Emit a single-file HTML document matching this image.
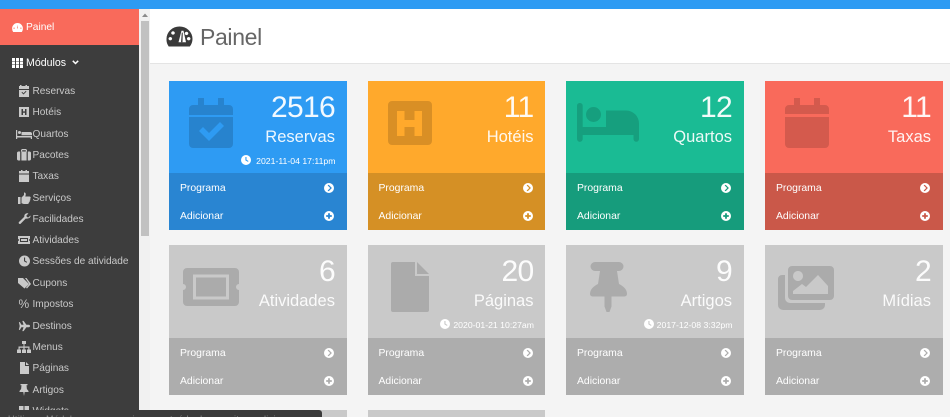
<!DOCTYPE html>
<html lang="pt"><head><meta charset="utf-8"><title>Painel</title>
<style>
html,body{margin:0;padding:0;width:950px;height:417px;overflow:hidden;background:#f4f4f4;font-family:"Liberation Sans",sans-serif}
div,span,svg{position:absolute;display:block}
.wrap{left:0;top:0;width:950px;height:417px;overflow:hidden;background:#f4f4f4}
.top{left:0;top:0;width:950px;height:9px;background:#2e9bf3}
.side{left:0;top:9px;width:139px;height:408px;background:#3d3d3d}
.act{left:0;top:9px;width:139px;height:36px;background:#f96a5b}
.sb{left:139px;top:9px;width:11px;height:408px;background:#f1f1f1}
.th{left:141px;top:21px;width:8px;height:215px;background:#c1c1c1}
.hd{left:150px;top:9px;width:800px;height:54px;background:#fff;border-bottom:1px solid #e4e4e4}
.t{font-size:23px;color:#666;left:200px;top:23px;line-height:28px;letter-spacing:-.35px}
.m{left:32.5px;font-size:10.1px;line-height:14px;color:#c9c9c9;white-space:nowrap;margin-top:1px}
.mi{left:17px;width:14px;height:12px;fill:#c9c9c9}
.c{width:177.5px;height:149.5px;overflow:hidden}
.b{left:0;top:92.5px;width:100%;height:57px}
.n{right:11.5px;top:8.5px;font-size:30px;line-height:36px;letter-spacing:-.7px;color:rgba(255,255,255,.94);white-space:nowrap}
.l{right:11.5px;top:44.5px;font-size:16.5px;line-height:22px;color:rgba(255,255,255,.92);white-space:nowrap}
.d{right:11px;top:73.5px;font-size:8.7px;line-height:12px;color:#fff;white-space:nowrap}
.dc{width:10px;height:10px;top:74px;fill:#fff}
.p{left:11px;font-size:10.4px;line-height:14px;color:#fff;white-space:nowrap}
.r{left:155px;width:10px;height:10px;fill:#fff}
.i{fill:rgba(0,0,0,.15)}
.g{background:#c9c9c9}.g .b{background:#adadad}
.tip{left:0;top:410px;width:322px;height:7px;background:#3a3a3a;border-radius:0 3px 0 0;overflow:hidden}
.tip span{left:8px;top:3.5px;font-size:9px;line-height:10px;color:#8c8c8c;white-space:nowrap;letter-spacing:.35px}
</style></head><body>
<div class="wrap">
<svg width="0" height="0" style="left:0;top:0"><defs>
<symbol id="go" viewBox="0 0 10 10"><path fill-rule="evenodd" d="M5 0a5 5 0 1 1 0 10A5 5 0 0 1 5 0zM3.6 2.4 6.2 5 3.6 7.6 4.7 8.2 7.9 5 4.7 1.8z"/></symbol>
<symbol id="pl" viewBox="0 0 10 10"><path fill-rule="evenodd" d="M5 0a5 5 0 1 1 0 10A5 5 0 0 1 5 0zM4.100 2.200v1.900H2.200v1.800h1.900v1.900h1.800V5.900h1.900V4.100H5.900V2.200z"/></symbol>
<symbol id="ck" viewBox="0 0 10 10"><path fill-rule="evenodd" d="M5 0a5 5 0 1 1 0 10A5 5 0 0 1 5 0zM4.400 2v3.400L7 6.900l.5-.9-2-1.200V2z"/></symbol>
</defs></svg>

<div class="top"></div>
<div class="side"></div>
<div class="act"></div>
<svg style="left:11.500px;top:23px;fill:#fff" width="11" height="9" viewBox="0 0 12 10"><path fill-rule="evenodd" d="M6 0a6 6 0 0 1 6 6c0 1.500-.4 2.900-1.200 4H1.200A7 7 0 0 1 0 6a6 6 0 0 1 6-6zM6 2 5.500 6h1zM2.200 5a.7.700 0 1 0 .01 0zM9.800 5a.7.700 0 1 0 .01 0z"/></svg>
<span style="left:26px;top:21px;font-size:10.2px;line-height:14px;color:#fff">Painel</span>
<svg style="left:12px;top:58px;fill:#fff" width="11" height="10" viewBox="0 0 11 10"><path d="M0 0h3v3H0zM4 0h3v3H4zM8 0h3v3H8zM0 3.500h3v3H0zM4 3.500h3v3H4zM8 3.500h3v3H8zM0 7h3v3H0zM4 7h3v3H4zM8 7h3v3H8z"/></svg>
<span style="left:26px;top:56px;font-size:10.6px;line-height:14px;color:#fff">Módulos</span>
<svg style="left:72px;top:60px" width="7" height="5" viewBox="0 0 7 5"><path d="M.8.800 3.500 3.500 6.200.800" fill="none" stroke="#fff" stroke-width="1.500"/></svg>

<svg class="mi" style="top:85px" viewBox="0 0 14 12"><path fill-rule="evenodd" d="M3 0h1.500v1h4V0H10v1h2v3H2V1h1zM2 5h10v7H2zM4.500 7.500l2 2 3-3-.7-.6-2.300 2.300-1.300-1.300z"/></svg><span class="m" style="top:84px">Reservas</span>
<svg class="mi" style="top:106px" viewBox="0 0 14 12"><path fill-rule="evenodd" d="M2 1h10v10H2zM4.500 3v6H6V6.800h2V9h1.500V3H8v2.400H6V3z"/></svg><span class="m" style="top:105px">Hotéis</span>
<svg class="mi" style="top:128px;left:16px;width:16px" viewBox="0 0 16 12"><path d="M0 2h1.200v6H16v3h-1.200V9.500H1.200V11H0zM2 4.500a1.500 1.500 0 1 1 3 0 1.500 1.500 0 0 1-3 0zM5.500 4H14a2 2 0 0 1 2 2v1.200H5.500z"/></svg><span class="m" style="top:127px">Quartos</span>
<svg class="mi" style="top:149px" viewBox="0 0 14 12"><path fill-rule="evenodd" d="M5 0h4l1 1v1.500h3l1 1v7l-1 1H1l-1-1v-7l1-1h3V1zM5.200 1.200v1.300h3.600V1.200zM3.200 2.500v9h1.200v-9zM9.600 2.500v9h1.200v-9z"/></svg><span class="m" style="top:148px">Pacotes</span>
<svg class="mi" style="top:170px" viewBox="0 0 14 12"><path d="M4 0h1.500v1h3V0H10v1h2v2.500H2V1h2zM2 4.500h10V12H2z"/></svg><span class="m" style="top:169px">Taxas</span>
<svg class="mi" style="top:192px" viewBox="0 0 14 12"><path d="M1 5h2.500v7H1zM4.500 5.500 7 3V.500c1.500 0 2 1 1.700 2.500L8.300 4.500H12.500c1.500 0 1.500 2 .6 2.300.5.900.2 1.800-.4 2 .2.900-.2 1.600-.8 1.700 0 1-.6 1.500-1.500 1.500H7c-1 0-1.500-.5-2.500-.7z"/></svg><span class="m" style="top:191px">Serviços</span>
<svg class="mi" style="top:213px" viewBox="0 0 14 12"><path d="M13.500 2.500 11.300 4.500 9.800 4 9.400 2.500 11.400.500C9.500-.3 7 1 7.300 3.800L2 9c-1 1 .5 2.700 1.600 1.700L8.800 5.500c2.700.5 5.200-1 4.700-3z"/></svg><span class="m" style="top:212px">Facilidades</span>
<svg class="mi" style="top:234px" viewBox="0 0 14 12"><path fill-rule="evenodd" d="M1 2h12v3a1 1 0 0 0 0 2v3H1V7a1 1 0 0 0 0-2zM3 4v4h8V4z"/><path d="M4 5h6v2H4z"/></svg><span class="m" style="top:233px">Atividades</span>
<svg class="mi" style="top:255px" viewBox="0 0 14 12"><path fill-rule="evenodd" d="M7.500 0.500a5.500 5.500 0 1 1 0 11 5.500 5.500 0 0 1 0-11zM7 2.500v3.800l2.600 1.500.5-.9-2-1.200V2.500z"/></svg><span class="m" style="top:254px">Sessões de atividade</span>
<svg class="mi" style="top:277px" viewBox="0 0 14 12"><path d="M1 1h5l6 6-4.500 4.500L1 6zM8 1h1.500l4.500 6-4 4.500-1-.8L12.200 7z"/></svg><span class="m" style="top:276px">Cupons</span>
<span style="left:18.500px;top:297px;font-size:12px;line-height:14px;color:#c9c9c9">%</span><span class="m" style="top:297px">Impostos</span>
<svg class="mi" style="top:320px;left:18px;width:12px" viewBox="0 0 14 12"><path d="M1 1.500h1.200L4 4.500h2.500L5 0h1.500l3.300 4.500H12.500c2 0 2 3 0 3H9.800L6.500 12H5l1.500-4.500H4L2.200 10.500H1L2 6z"/></svg><span class="m" style="top:319px">Destinos</span>
<svg class="mi" style="top:341px;left:16.500px" viewBox="0 0 14 12"><path d="M5 0h4v3H7.500v2.500H12.500V8.500h1.500V12h-4V8.500h1.300V6.700H7.600v1.800H9V12H5V8.500h1.400V6.700H2.700v1.800H4V12H0V8.500h1.500V5.500h5V3H5z"/></svg><span class="m" style="top:340px">Menus</span>
<svg class="mi" style="top:362px" viewBox="0 0 14 12"><path d="M3 0h5v4h4v8H3zM9 0l3 3H9z"/></svg><span class="m" style="top:361px">Páginas</span>
<svg class="mi" style="top:384px" viewBox="0 0 14 12"><path d="M3.500 0h7v1.200H9.500l.4 3.800 1.600 2v1H7.700L7 12l-.7-4H2.500V7l1.600-2 .4-3.800H3.500z"/></svg><span class="m" style="top:383px">Artigos</span>
<svg class="mi" style="top:405px" viewBox="0 0 14 12"><path d="M2 1h4.500v4.500H2zM7.500 1H12v4.500H7.500zM2 6.500h4.500V11H2zM7.500 6.500H12V11H7.500z"/></svg><span class="m" style="top:404px">Widgets</span>

<div class="sb"></div><div class="th"></div>
<svg style="left:141px;top:13px;fill:#8a8a8a" width="8" height="5" viewBox="0 0 8 5"><path d="M4 .500 7 4H1z"/></svg>
<div class="hd"></div>
<svg style="left:166px;top:26px;fill:#3a3a3a" width="27" height="21" viewBox="0 0 27 22" preserveAspectRatio="none"><path fill-rule="evenodd" d="M13.500 0.500A13 13 0 0 1 26.500 13.500c0 3-1 5.800-2.700 8H2.700A13 13 0 0 1 .5 13.500 13 13 0 0 1 13.500 .500zM15.500 5h2L20 17h-7.500zM7 5.500a1.800 1.800 0 1 0 .01 0zM4.300 11.500a1.800 1.800 0 1 0 .01 0zM22.700 11.500a1.800 1.800 0 1 0 .01 0zM20.500 6a1.800 1.800 0 1 0 .01 0z"/><path d="M15.800 7 16.800 7 16.500 17H15z"/></svg>
<span class="t">Painel</span>

<!-- Row 1 -->
<div class="c" style="left:169px;top:80.500px;background:#2e9bf3"><div class="b" style="background:#2985d2"></div>
<svg class="i" style="left:20px;top:17.500px" width="44" height="50" viewBox="0 0 44 50"><path fill-rule="evenodd" d="M9 0h6v7h14V0h6v7h5a4 4 0 0 1 4 4v6H0v-6a4 4 0 0 1 4-4h5zM0 19h44v27a4 4 0 0 1-4 4H4a4 4 0 0 1-4-4zM10 33l4-4 6 6 11-11 4 4-15 15z"/></svg>
<span class="n" style="top:9px">2516</span><span class="l" style="top:45px">Reservas</span><svg class="dc" style="left:71.500px;top:74.500px"><use href="#ck"/></svg><span class="d" style="top:74px">2021-11-04 17:11pm</span>
<span class="p" style="top:101.500px">Programa</span><svg class="r" style="top:102.500px"><use href="#go"/></svg>
<span class="p" style="top:129.500px">Adicionar</span><svg class="r" style="top:130.500px"><use href="#pl"/></svg></div>

<div class="c" style="left:367.500px;top:80.500px;background:#ffa92c"><div class="b" style="background:#d59025"></div>
<svg class="i" style="left:20px;top:20.500px" width="44" height="44" viewBox="0 0 44 44"><path fill-rule="evenodd" d="M4 0h36a4 4 0 0 1 4 4v36a4 4 0 0 1-4 4H4a4 4 0 0 1-4-4V4a4 4 0 0 1 4-4zM9 10v25h7.500V26h10v9H34V10h-7.500v9h-10v-9z"/></svg>
<span class="n" style="top:9px">11</span><span class="l" style="top:45px">Hotéis</span>
<span class="p" style="top:101.500px">Programa</span><svg class="r" style="top:102.500px"><use href="#go"/></svg>
<span class="p" style="top:129.500px">Adicionar</span><svg class="r" style="top:130.500px"><use href="#pl"/></svg></div>

<div class="c" style="left:566px;top:80.500px;background:#1abb94"><div class="b" style="background:#169c7c"></div>
<svg class="i" style="left:11px;top:22.500px" width="62" height="40" viewBox="0 0 62 40"><path d="M3 0a2.700 2.700 0 0 1 2.700 2.700V24H29V7.500h20A13 13 0 0 1 62 20.500V36a2.700 2.700 0 0 1-5.500 0v-4H5.700v4A2.700 2.700 0 0 1 0 36V2.700A2.700 2.700 0 0 1 3 0zM16.500 4a7.500 7.500 0 1 1 0 15 7.500 7.500 0 0 1 0-15z"/></svg>
<span class="n" style="top:9px">12</span><span class="l" style="top:45px">Quartos</span>
<span class="p" style="top:101.500px">Programa</span><svg class="r" style="top:102.500px"><use href="#go"/></svg>
<span class="p" style="top:129.500px">Adicionar</span><svg class="r" style="top:130.500px"><use href="#pl"/></svg></div>

<div class="c" style="left:765px;top:80.500px;background:#f96a5b"><div class="b" style="background:#ca5849"></div>
<svg class="i" style="left:20px;top:17.500px" width="44" height="50" viewBox="0 0 44 50"><path d="M9 0h6v7h14V0h6v7h5a4 4 0 0 1 4 4v5H0v-5a4 4 0 0 1 4-4h5zM0 19h44v27a4 4 0 0 1-4 4H4a4 4 0 0 1-4-4z"/></svg>
<span class="n" style="top:9px">11</span><span class="l" style="top:45px">Taxas</span>
<span class="p" style="top:101.500px">Programa</span><svg class="r" style="top:102.500px"><use href="#go"/></svg>
<span class="p" style="top:129.500px">Adicionar</span><svg class="r" style="top:130.500px"><use href="#pl"/></svg></div>

<!-- Row 2 -->
<div class="c g" style="left:169px;top:245px"><div class="b"></div>
<svg class="i" style="left:14px;top:23px" width="56" height="38" viewBox="0 0 56 38"><path fill-rule="evenodd" d="M4 0h48a4 4 0 0 1 4 4v12a3 3 0 0 0 0 6v12a4 4 0 0 1-4 4H4a4 4 0 0 1-4-4V22a3 3 0 0 0 0-6V4a4 4 0 0 1 4-4zM10 6.500v25h36v-25zM13 9.500h30v19H13z"/></svg>
<span class="n">6</span><span class="l">Atividades</span>
<span class="p" style="top:101.500px">Programa</span><svg class="r" style="top:102.500px"><use href="#go"/></svg>
<span class="p" style="top:129.500px">Adicionar</span><svg class="r" style="top:130.500px"><use href="#pl"/></svg></div>

<div class="c g" style="left:367.500px;top:245px"><div class="b"></div>
<svg class="i" style="left:23px;top:17px" width="38" height="50" viewBox="0 0 38 50"><path d="M2 0h22v14h14v34a2 2 0 0 1-2 2H2a2 2 0 0 1-2-2V2a2 2 0 0 1 2-2zM26 0l12 12H26z"/></svg>
<span class="n">20</span><span class="l">Páginas</span><svg class="dc" style="left:72px"><use href="#ck"/></svg><span class="d">2020-01-21 10:27am</span>
<span class="p" style="top:101.500px">Programa</span><svg class="r" style="top:102.500px"><use href="#go"/></svg>
<span class="p" style="top:129.500px">Adicionar</span><svg class="r" style="top:130.500px"><use href="#pl"/></svg></div>

<div class="c g" style="left:566px;top:245px"><div class="b"></div>
<svg class="i" style="left:24px;top:17px" width="37" height="50" viewBox="0 0 37 50"><path d="M5 0h24a2.500 2.500 0 0 1 0 9h-2l2 13c4 2 8 5 8 10a2.500 2.500 0 0 1-2.500 2.500H21.500v10l-2 5.500h-3l-2-5.500v-10H2.500A2.500 2.500 0 0 1 0 32c0-5 4-8 8-10L10 9H5A2.500 2.500 0 0 1 5 0z"/></svg>
<span class="n">9</span><span class="l">Artigos</span><svg class="dc" style="left:77.500px"><use href="#ck"/></svg><span class="d">2017-12-08 3:32pm</span>
<span class="p" style="top:101.500px">Programa</span><svg class="r" style="top:102.500px"><use href="#go"/></svg>
<span class="p" style="top:129.500px">Adicionar</span><svg class="r" style="top:130.500px"><use href="#pl"/></svg></div>

<div class="c g" style="left:765px;top:245px"><div class="b"></div>
<svg class="i" style="left:13px;top:21px" width="56" height="44" viewBox="0 0 56 44"><path fill-rule="evenodd" d="M14 0h38a4 4 0 0 1 4 4v26a4 4 0 0 1-4 4H14a4 4 0 0 1-4-4V4a4 4 0 0 1 4-4zM20 5a5 5 0 1 0 .01 0zM15 28h35V20L40 9 28 21l-4-3-9 7z"/><path d="M4 9h3v23a5 5 0 0 0 5 5h35v2a5 5 0 0 1-5 5H5a5 5 0 0 1-5-5V13a4 4 0 0 1 4-4z"/></svg>
<span class="n">2</span><span class="l">Mídias</span>
<span class="p" style="top:101.500px">Programa</span><svg class="r" style="top:102.500px"><use href="#go"/></svg>
<span class="p" style="top:129.500px">Adicionar</span><svg class="r" style="top:130.500px"><use href="#pl"/></svg></div>

<!-- Row 3 -->
<div class="c g" style="left:169px;top:410px;height:7px"></div>
<div class="c g" style="left:367.500px;top:410px;height:7px"></div>

<div class="tip"><span>Utilize o Módulo para gerenciar o conteúdo do seu site e adicionar novos itens</span></div>
</div>
</body></html>
